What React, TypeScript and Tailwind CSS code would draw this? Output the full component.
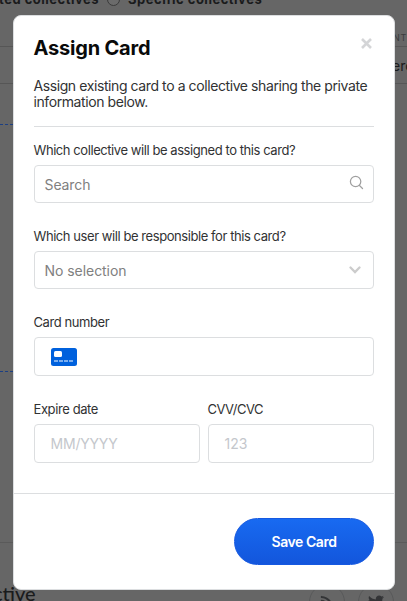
import React from "react";
import { FaTwitter, FaRss } from "react-icons/fa";

function Label({ children, className }: { children: React.ReactNode; className: string }) {
  return (
    <label className={`-ml-[0.5px] block h-4 whitespace-nowrap text-[13px] leading-4 text-[#313233] ${className}`}>
      {children}
    </label>
  );
}

const box = "flex items-center rounded border border-[#dcdee0] bg-white";

function CardIcon() {
  return (
    <svg width="26" height="18" viewBox="0 0 26 18">
      <rect width="26" height="18" rx="2.5" fill="#0061dd" />
      <rect x="3" y="3" width="8" height="6" rx="1.5" fill="#fff" />
      <path d="M3 13h4M8 13h4M13 13h4M18 13h4" stroke="#a3c8f6" strokeWidth="1.7" />
    </svg>
  );
}

function PageBehind() {
  return (
    <div className="flex h-full flex-col text-[#1a1b1c]">
      <div className="-mt-[10px] -ml-[1px] flex h-[18px] items-center whitespace-nowrap text-[13px] font-bold leading-[18px]">
        <span className="tracking-[0.5px]">ted collectives</span>
        <span className="ml-2 mr-[8px] h-[13px] w-[13px] rounded-full border border-[#3b3b3b] bg-[#6b6b6b]" />
        <span className="tracking-[0.5px]">Specific collectives</span>
      </div>
      <div className="flex h-[39px] justify-end border-b border-[#565656] pt-[24px]">
        <span className="w-[14px] whitespace-nowrap text-[9px] leading-[12px] tracking-[0.7px] text-[#3b3c3e]">NT</span>
      </div>
      <div className="flex h-[37px] items-center justify-end overflow-hidden border-b border-[#565656]">
        <span className="w-[15px] whitespace-nowrap text-[14px]">erc</span>
      </div>
      <div className="mt-[40px] h-[248px] w-[200px] border-y border-dashed border-[#1c3f83]" />
      <div className="mt-[170px] border-t border-[#5a5a5a]" />
      <div className="flex h-[58px] items-start justify-between overflow-hidden">
        <span className="-ml-[7px] mt-[37px] whitespace-nowrap font-['Lato'] text-[20px] font-medium leading-[26px]">ctive</span>
        <div className="-mr-[36px] mt-[41px] flex gap-[13px] text-[#333436]">
          <span className="flex h-9 w-9 items-center justify-center rounded-full border border-[#58595a]"><FaRss size={14} /></span>
          <span className="flex h-9 w-9 items-center justify-center rounded-full border border-[#58595a]"><FaTwitter size={16} /></span>
          <span className="h-9 w-9 rounded-full border border-[#58595a]" />
        </div>
      </div>
    </div>
  );
}

export default function App() {
  return (
    <div className="relative h-[601px] w-[407px] overflow-hidden bg-[#666] font-['Inter',sans-serif]">
      <PageBehind />
      <div className="absolute left-[13px] top-[15px] flex h-[575px] w-[382px] flex-col rounded-lg border border-[#dcdee0] bg-white">
        <div className="px-5">
          <div className="flex justify-between pt-[19px]">
            <h1 className="-ml-[0.5px] h-[26px] whitespace-nowrap text-[20px] font-bold leading-[26px] tracking-[-0.2px] text-[#090a0a]">Assign Card</h1>
            <svg className="mr-[2px] mt-[3px]" width="11" height="11" viewBox="0 0 11 11" fill="none" stroke="#d4d5d7" strokeWidth="2.6">
              <path d="M1 1l9 9M10 1l-9 9" />
            </svg>
          </div>
          <p className="-ml-[0.5px] mt-[17px] whitespace-nowrap text-[14px] leading-4 tracking-[-0.41px] text-[#313233]">
            Assign existing card to a collective sharing the private
            <br />
            information below.
          </p>
          <div className="mt-4 border-t border-[#dcdee0]" />
          <Label className="mt-[15px] tracking-[-0.43px]">Which collective will be assigned to this card?</Label>
          <div className={`${box} mt-[7px] h-[38px] justify-between pl-[9.5px] pr-[9px] text-[14px] tracking-[-0.1px] text-[#808080]`}>
            <span>Search</span>
            <svg className="-mt-[3px]" width="15" height="15" viewBox="0 0 15 15" fill="none" stroke="#a0a0a0" strokeWidth="1.25" strokeLinecap="round">
              <circle cx="6.6" cy="6.5" r="5.2" />
              <path d="M10.5 10.5l3 3" />
            </svg>
          </div>
          <Label className="mt-[25px] tracking-[-0.43px]">Which user will be responsible for this card?</Label>
          <div className={`${box} mt-[7px] h-[38px] justify-between pl-[9.5px] pr-[12px] text-[14px] tracking-[-0.05px] text-[#808080]`}>
            <span>No selection</span>
            <svg width="12" height="8" viewBox="0 0 12 8" fill="none" stroke="#ccc" strokeWidth="2.3" strokeLinecap="round">
              <path d="M1.5 1.5L6 6l4.5-4.5" />
            </svg>
          </div>
          <Label className="mt-[25px] tracking-[-0.42px]">Card number</Label>
          <div className={`${box} mt-[7px] h-[39px] pl-4`}>
            <CardIcon />
          </div>
          <div className="mt-[25px] grid grid-cols-2 gap-2">
            <div>
              <Label className="tracking-[-0.4px]">Expire date</Label>
              <div className={`${box} mt-[7px] h-[39px] pl-[15.5px] text-[14px] tracking-[-0.2px] text-[#c4c7cc]`}>MM/YYYY</div>
            </div>
            <div>
              <Label className="tracking-[-0.55px]">CVV/CVC</Label>
              <div className={`${box} mt-[7px] h-[39px] pl-[15.5px] text-[14px] text-[#c4c7cc]`}>123</div>
            </div>
          </div>
        </div>
        <div className="mt-[30px] flex justify-end border-t border-[#dcdee0] px-5 pt-6">
          <button className="h-[47px] w-[140px] rounded-full border border-[#1659e1] bg-linear-to-b from-[#186af1] to-[#1356dc] text-[14px] font-semibold tracking-[-0.45px] text-white">Save Card</button>
        </div>
      </div>
    </div>
  );
}
